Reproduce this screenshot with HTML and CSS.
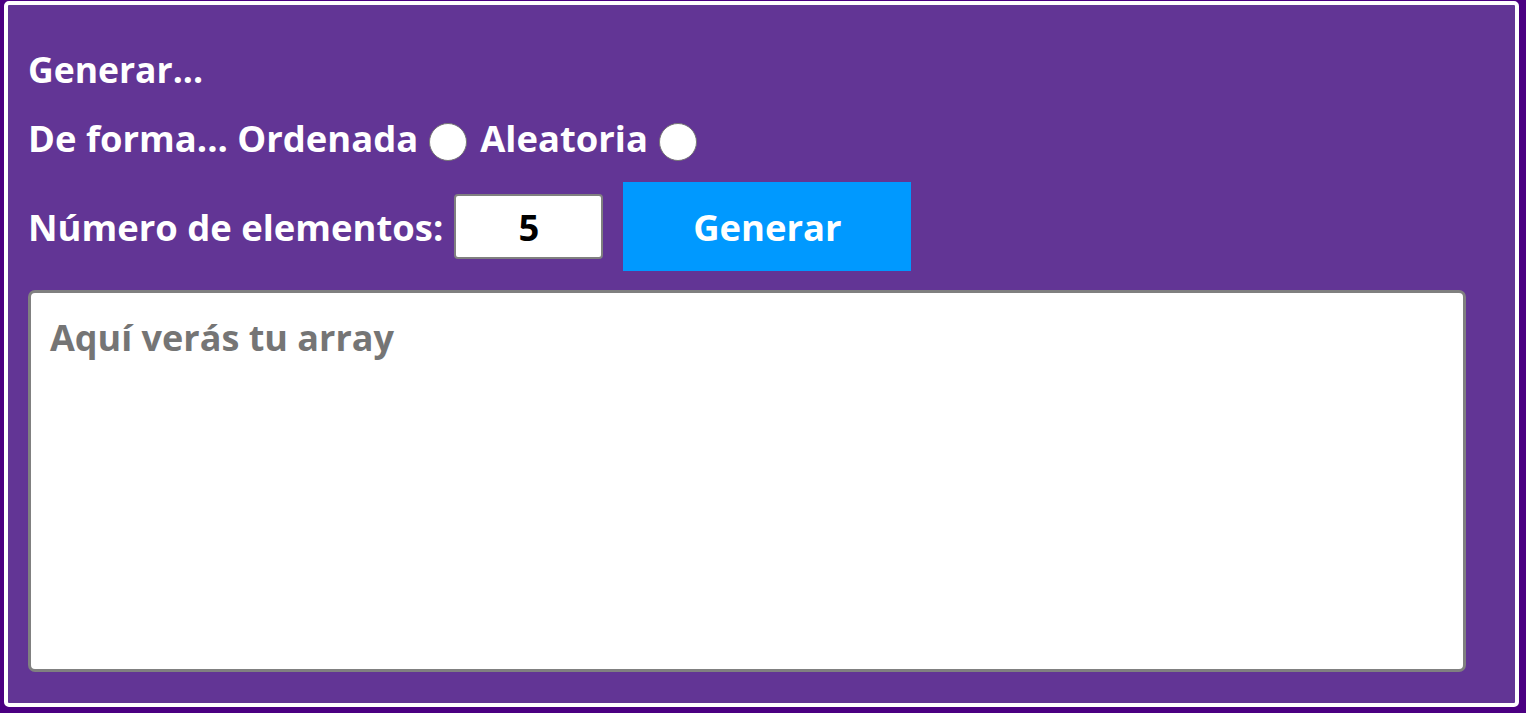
FILE: index.html
```html
<!DOCTYPE html>
<html lang="es">
<head>
<meta charset="utf-8">
<title>Generar array</title>
<link rel="stylesheet" href="styles.css">
</head>
<body>
<div class="panel">
  <p class="title">Generar...</p>
  <div class="row row-form">
    <span>De forma... Ordenada</span>
    <span class="radio"></span>
    <span class="label-alt">Aleatoria</span>
    <span class="radio"></span>
  </div>
  <div class="row row-num">
    <span>Número de elementos:</span>
    <span class="num">5</span>
    <span class="btn">Generar</span>
  </div>
  <div class="output">Aquí verás tu array</div>
</div>
</body>
</html>
```
FILE: styles.css
```css
html, body {
  margin: 0;
  padding: 0;
  background: #4b0082;
  height: 100%;
}
body {
  padding: 1px 7px 6px 4px;
  box-sizing: border-box;
  font-family: "Open Sans", Lato, sans-serif;
  font-weight: 700;
  color: #fff;
}
.panel {
  box-sizing: border-box;
  height: 706px;
  background: #623595;
  border: 4px solid #fff;
  border-radius: 5px;
  padding: 44px 20px 0 20px;
  display: flex;
  flex-direction: column;
}
.title {
  margin: 0;
  font-size: 35.5px;
  line-height: 40px;
}
.row {
  display: flex;
  font-size: 36.4px;
  line-height: 40px;
}
.row-form {
  align-items: flex-start;
  margin-top: 29px;
  gap: 11px;
}
.radio {
  box-sizing: border-box;
  width: 38px;
  height: 38px;
  margin-top: 5px;
  border-radius: 50%;
  background: #fff;
  border: 1px solid #767676;
}
.label-alt {
  margin-left: 2px;
}
.row-num {
  align-items: center;
  margin-top: 21px;
}
.num {
  box-sizing: border-box;
  width: 149px;
  height: 65px;
  margin-left: 11px;
  background: #fff;
  border: 2px solid #808080;
  border-radius: 4px;
  color: #000;
  display: flex;
  align-items: center;
  justify-content: center;
}
.btn {
  width: 288px;
  height: 89px;
  margin-left: 20px;
  background: #0099ff;
  display: flex;
  align-items: center;
  justify-content: center;
}
.output {
  box-sizing: border-box;
  width: 1438px;
  height: 382px;
  margin-top: 19px;
  background: #fff;
  border: 3px solid #808080;
  border-radius: 7px;
  padding: 25px 19px;
  color: #757575;
  font-size: 36px;
  line-height: 40px;
}
```
